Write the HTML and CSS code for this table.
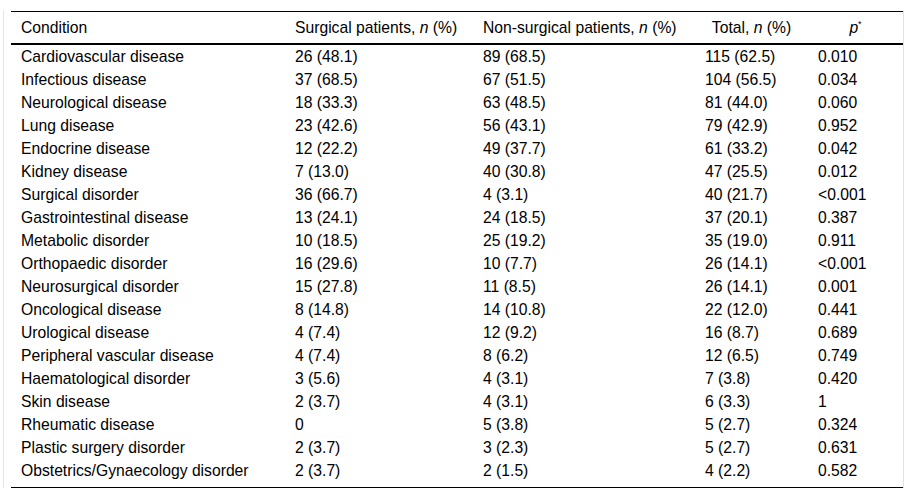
FILE: index.html
```html
<!DOCTYPE html>
<html lang="en">
<head>
<meta charset="utf-8">
<title>Conditions table</title>
<link rel="stylesheet" href="styles.css">
</head>
<body>
<div class="frame">
<table class="data">
<colgroup>
<col class="c1"><col class="c2"><col class="c3"><col class="c4"><col class="c5">
</colgroup>
<thead>
<tr>
<th>Condition</th>
<th>Surgical patients, <i>n</i> (%)</th>
<th>Non-surgical patients, <i>n</i> (%)</th>
<th class="ctr">Total, <i>n</i> (%)</th>
<th class="ctr"><i>p</i><sup>*</sup></th>
</tr>
</thead>
<tbody>
<tr><td>Cardiovascular disease</td><td>26 (48.1)</td><td>89 (68.5)</td><td>115 (62.5)</td><td>0.010</td></tr>
<tr><td>Infectious disease</td><td>37 (68.5)</td><td>67 (51.5)</td><td>104 (56.5)</td><td>0.034</td></tr>
<tr><td>Neurological disease</td><td>18 (33.3)</td><td>63 (48.5)</td><td>81 (44.0)</td><td>0.060</td></tr>
<tr><td>Lung disease</td><td>23 (42.6)</td><td>56 (43.1)</td><td>79 (42.9)</td><td>0.952</td></tr>
<tr><td>Endocrine disease</td><td>12 (22.2)</td><td>49 (37.7)</td><td>61 (33.2)</td><td>0.042</td></tr>
<tr><td>Kidney disease</td><td>7 (13.0)</td><td>40 (30.8)</td><td>47 (25.5)</td><td>0.012</td></tr>
<tr><td>Surgical disorder</td><td>36 (66.7)</td><td>4 (3.1)</td><td>40 (21.7)</td><td>&lt;0.001</td></tr>
<tr><td>Gastrointestinal disease</td><td>13 (24.1)</td><td>24 (18.5)</td><td>37 (20.1)</td><td>0.387</td></tr>
<tr><td>Metabolic disorder</td><td>10 (18.5)</td><td>25 (19.2)</td><td>35 (19.0)</td><td>0.911</td></tr>
<tr><td>Orthopaedic disorder</td><td>16 (29.6)</td><td>10 (7.7)</td><td>26 (14.1)</td><td>&lt;0.001</td></tr>
<tr><td>Neurosurgical disorder</td><td>15 (27.8)</td><td>11 (8.5)</td><td>26 (14.1)</td><td>0.001</td></tr>
<tr><td>Oncological disease</td><td>8 (14.8)</td><td>14 (10.8)</td><td>22 (12.0)</td><td>0.441</td></tr>
<tr><td>Urological disease</td><td>4 (7.4)</td><td>12 (9.2)</td><td>16 (8.7)</td><td>0.689</td></tr>
<tr><td>Peripheral vascular disease</td><td>4 (7.4)</td><td>8 (6.2)</td><td>12 (6.5)</td><td>0.749</td></tr>
<tr><td>Haematological disorder</td><td>3 (5.6)</td><td>4 (3.1)</td><td>7 (3.8)</td><td>0.420</td></tr>
<tr><td>Skin disease</td><td>2 (3.7)</td><td>4 (3.1)</td><td>6 (3.3)</td><td>1</td></tr>
<tr><td>Rheumatic disease</td><td>0</td><td>5 (3.8)</td><td>5 (2.7)</td><td>0.324</td></tr>
<tr><td>Plastic surgery disorder</td><td>2 (3.7)</td><td>3 (2.3)</td><td>5 (2.7)</td><td>0.631</td></tr>
<tr><td>Obstetrics/Gynaecology disorder</td><td>2 (3.7)</td><td>2 (1.5)</td><td>4 (2.2)</td><td>0.582</td></tr>
</tbody>
</table>
</div>
</body>
</html>
```
FILE: styles.css
```css
html, body {
  margin: 0;
  padding: 0;
  background: #fff;
}
body {
  font-family: "Liberation Sans", Arial, sans-serif;
  font-size: 15.7px;
  color: #000;
}
.frame {
  margin: 10px 0 0 3px;
  width: 901px;
  box-sizing: border-box;
  border-left: 1px solid #e4e4e4;
  border-right: 1px solid #e4e4e4;
  padding: 1px 0 0 7px;
}
.data {
  width: 892px;
  border-collapse: collapse;
  table-layout: fixed;
  border-top: 1px solid #000;
  border-bottom: 1px solid #000;
}
.c1 { width: 274px; }
.c2 { width: 188px; }
.c3 { width: 222px; }
.c4 { width: 113px; }
.c5 { width: 95px; }
.data th {
  font-weight: normal;
  text-align: left;
  padding: 4px 10px;
  line-height: 23px;
  border-bottom: 2px solid #000;
  white-space: nowrap;
}
.data th.ctr {
  text-align: center;
}
.data td {
  padding: 0 10px;
  line-height: 23px;
  white-space: nowrap;
}
.data tbody tr:first-child td {
  padding-top: 0;
}
.data tbody tr:last-child td {
  padding-bottom: 5px;
}
.data sup {
  font-size: 9px;
  line-height: 0;
  vertical-align: 6px;
}
```
